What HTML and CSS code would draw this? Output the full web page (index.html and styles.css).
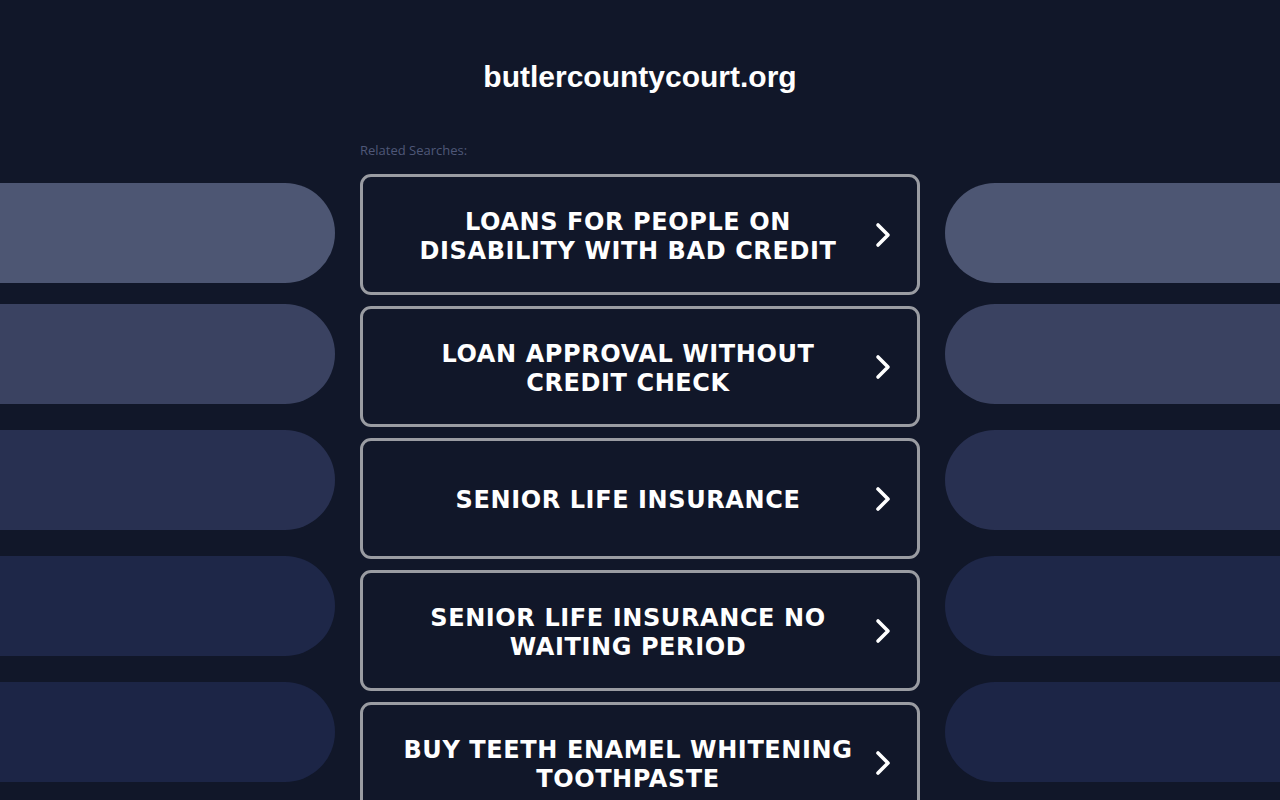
FILE: index.html
```html
<!DOCTYPE html>
<html lang="en">
<head>
<meta charset="utf-8">
<title>butlercountycourt.org</title>
<link rel="stylesheet" href="styles.css">
</head>
<body>
<header class="header">
  <h1 class="domain">butlercountycourt.org</h1>
  <p class="related">Related Searches:</p>
</header>
<main class="layout">
  <div class="side side-left">
    <div class="pill pill-1"></div>
    <div class="pill pill-2"></div>
    <div class="pill pill-3"></div>
    <div class="pill pill-4"></div>
    <div class="pill pill-5"></div>
  </div>
  <div class="links">
    <a class="link" href="#"><span class="link-text">LOANS FOR PEOPLE ON DISABILITY WITH BAD CREDIT</span><svg class="chev" viewBox="0 0 18 26"><polyline points="4,3 14,13 4,23"/></svg></a>
    <a class="link" href="#"><span class="link-text">LOAN APPROVAL WITHOUT CREDIT CHECK</span><svg class="chev" viewBox="0 0 18 26"><polyline points="4,3 14,13 4,23"/></svg></a>
    <a class="link" href="#"><span class="link-text">SENIOR LIFE INSURANCE</span><svg class="chev" viewBox="0 0 18 26"><polyline points="4,3 14,13 4,23"/></svg></a>
    <a class="link" href="#"><span class="link-text">SENIOR LIFE INSURANCE NO WAITING PERIOD</span><svg class="chev" viewBox="0 0 18 26"><polyline points="4,3 14,13 4,23"/></svg></a>
    <a class="link" href="#"><span class="link-text">BUY TEETH ENAMEL WHITENING TOOTHPASTE</span><svg class="chev" viewBox="0 0 18 26"><polyline points="4,3 14,13 4,23"/></svg></a>
  </div>
  <div class="side side-right">
    <div class="pill pill-1"></div>
    <div class="pill pill-2"></div>
    <div class="pill pill-3"></div>
    <div class="pill pill-4"></div>
    <div class="pill pill-5"></div>
  </div>
</main>
</body>
</html>
```
FILE: styles.css
```css
html {
  overflow: hidden;
}
body {
  margin: 0;
  background: #111729;
  font-family: "Liberation Sans", Arial, sans-serif;
  color: #fff;
}
.header {
  width: 560px;
  margin: 0 auto;
  padding-top: 58px;
}
.domain {
  margin: 0;
  font-size: 30px;
  line-height: 38px;
  font-weight: bold;
  text-align: center;
  color: #ffffff;
}
.related {
  margin: 46px 0 0;
  font-family: "Open Sans", sans-serif;
  font-size: 13px;
  line-height: 16px;
  color: #4f5778;
}
.layout {
  display: grid;
  grid-template-columns: 1fr 560px 1fr;
  column-gap: 25px;
  margin-top: 16px;
}
.side {
  display: flex;
  flex-direction: column;
  padding-top: 9px;
}
.pill {
  height: 100px;
  margin-bottom: 26px;
}
.pill-1 { margin-bottom: 21px; }
.side-left .pill { border-radius: 0 50px 50px 0; }
.side-right .pill { border-radius: 50px 0 0 50px; }
.pill-1 { background: #4d5673; }
.pill-2 { background: #3a4261; }
.pill-3 { background: #283051; }
.pill-4 { background: #1e2748; }
.pill-5 { background: #1c2546; }
.links {
  display: flex;
  flex-direction: column;
  gap: 11px;
}
.link {
  box-sizing: border-box;
  height: 121px;
  display: flex;
  align-items: center;
  border: 3px solid #9a9ca2;
  border-radius: 11px;
  padding: 0 25px 0 35px;
  text-decoration: none;
  color: #ffffff;
}
.link-text {
  flex: 1;
  padding: 4px 16px 0 0;
  text-align: center;
  font-family: "DejaVu Sans", Verdana, sans-serif;
  font-weight: bold;
  font-size: 24px;
  line-height: 29px;
  letter-spacing: 0.6px;
}
.chev {
  width: 18px;
  height: 26px;
  fill: none;
  stroke: #ffffff;
  stroke-width: 3.6;
  stroke-linecap: round;
  stroke-linejoin: round;
}
```
